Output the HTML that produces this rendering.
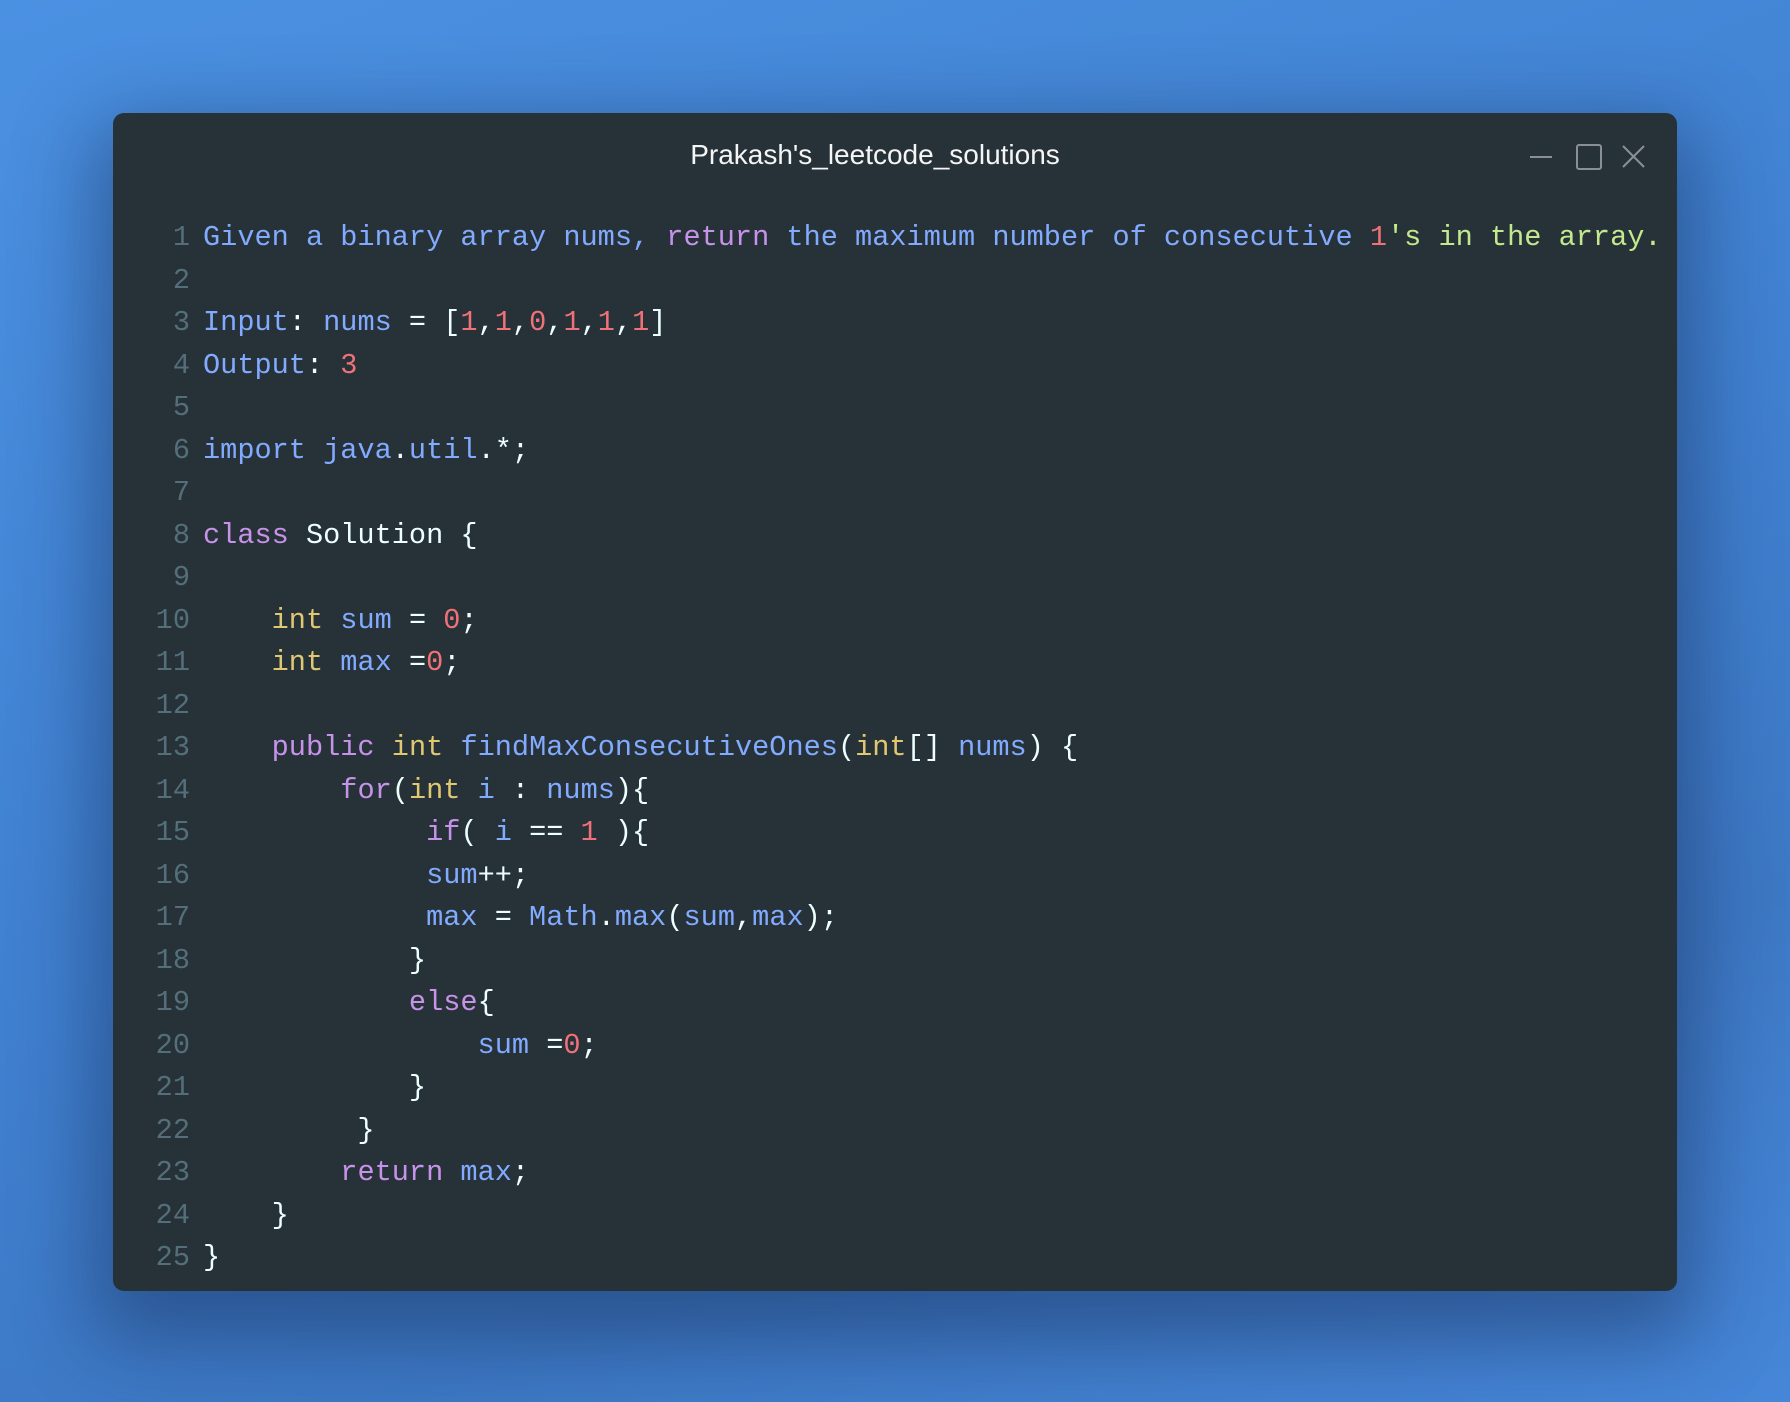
<!DOCTYPE html>
<html><head><meta charset="utf-8"><style>
html,body{margin:0;padding:0}
body{width:1790px;height:1402px;position:relative;overflow:hidden;
background:linear-gradient(160deg,#4b91e2 0%,#4080d0 50%,#3d78c4 75%,#4686d8 100%);}
.win{position:absolute;left:113px;top:113px;width:1564px;height:1178px;background:#263238;border-radius:11px;
box-shadow:0 30px 80px 20px rgba(20,40,80,0.45);}
.title{position:absolute;left:0;width:1750px;top:139px;text-align:center;font:28px "Liberation Sans",sans-serif;color:#f5f5f5;}
.code{position:absolute;left:14px;top:217px;font-family:"Liberation Mono",monospace;font-size:28.6px;line-height:42.5px;white-space:pre;color:#eeffff;}
.ln{display:inline-block;width:176px;text-align:right;color:#546e7a;padding-right:13px;}
.b{color:#82aaff}.p{color:#c792ea}.y{color:#e0c872}.r{color:#f07178}.g{color:#c3e88d}.w{color:#eeffff}
</style></head><body>
<div class="win"></div>
<div class="title">Prakash's_leetcode_solutions</div>
<svg style="position:absolute;left:0;top:0" width="1790" height="200">
<g stroke="#8a8f93" stroke-width="2" fill="none">
<line x1="1530" y1="157" x2="1552" y2="157"/>
<rect x="1577" y="145" width="24" height="24" rx="2"/>
<line x1="1623" y1="146" x2="1644" y2="167"/><line x1="1644" y1="146" x2="1623" y2="167"/>
</g></svg>
<div class="code"><span class="ln">1</span><span class="b">Given a binary array nums, </span><span class="p">return</span><span class="b"> the maximum number of consecutive </span><span class="r">1</span><span class="g">'s in the array.</span>
<span class="ln">2</span>
<span class="ln">3</span><span class="b">Input</span>: <span class="b">nums</span> = [<span class="r">1</span>,<span class="r">1</span>,<span class="r">0</span>,<span class="r">1</span>,<span class="r">1</span>,<span class="r">1</span>]
<span class="ln">4</span><span class="b">Output</span>: <span class="r">3</span>
<span class="ln">5</span>
<span class="ln">6</span><span class="b">import java</span>.<span class="b">util</span>.*;
<span class="ln">7</span>
<span class="ln">8</span><span class="p">class</span> Solution {
<span class="ln">9</span>
<span class="ln">10</span>    <span class="y">int</span> <span class="b">sum</span> = <span class="r">0</span>;
<span class="ln">11</span>    <span class="y">int</span> <span class="b">max</span> =<span class="r">0</span>;
<span class="ln">12</span>
<span class="ln">13</span>    <span class="p">public</span> <span class="y">int</span> <span class="b">findMaxConsecutiveOnes</span>(<span class="y">int</span>[] <span class="b">nums</span>) {
<span class="ln">14</span>        <span class="p">for</span>(<span class="y">int</span> <span class="b">i</span> : <span class="b">nums</span>){
<span class="ln">15</span>             <span class="p">if</span>( <span class="b">i</span> == <span class="r">1</span> ){
<span class="ln">16</span>             <span class="b">sum</span>++;
<span class="ln">17</span>             <span class="b">max</span> = <span class="b">Math</span>.<span class="b">max</span>(<span class="b">sum</span>,<span class="b">max</span>);
<span class="ln">18</span>            }
<span class="ln">19</span>            <span class="p">else</span>{
<span class="ln">20</span>                <span class="b">sum</span> =<span class="r">0</span>;
<span class="ln">21</span>            }
<span class="ln">22</span>         }
<span class="ln">23</span>        <span class="p">return</span> <span class="b">max</span>;
<span class="ln">24</span>    }
<span class="ln">25</span>}</div>
</body></html>
